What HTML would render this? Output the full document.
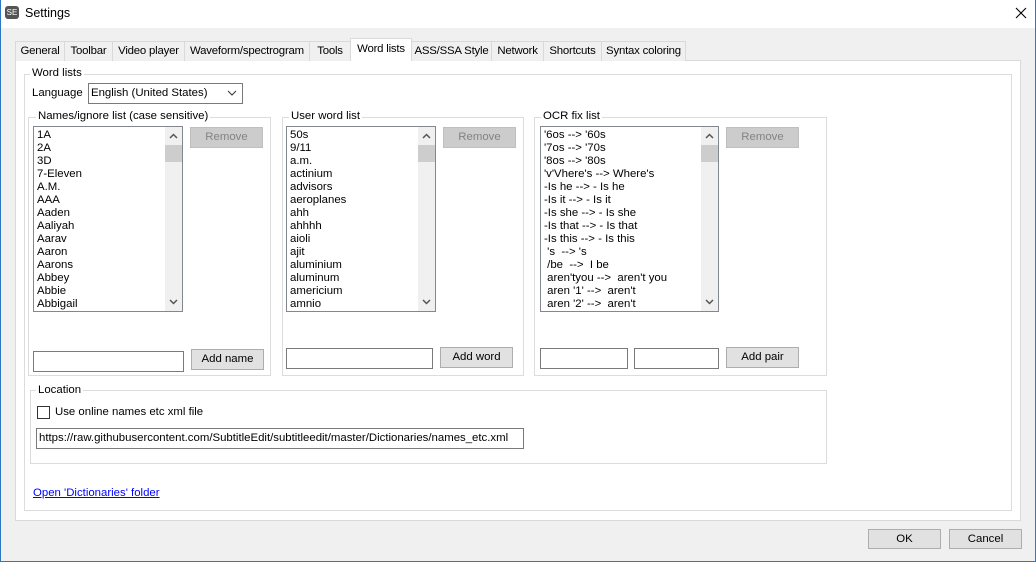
<!DOCTYPE html>
<html><head><meta charset="utf-8"><style>
*{box-sizing:border-box;margin:0;padding:0}
body{width:1036px;height:562px;background:#f0f0f0;font:11.4px "Liberation Sans",sans-serif;color:#000;position:relative;overflow:hidden}
.a{position:absolute}
.win{left:0;top:0;width:1036px;height:562px;border:1px solid #2b79c2;border-top:none}
.title{left:0;top:0;width:1036px;height:28px;background:#fff}
.tab{top:41px;height:20px;background:#f0f0f0;border:1px solid #d9d9d9;border-bottom:none;text-align:center;line-height:18px;white-space:nowrap;letter-spacing:-0.2px}
.tab.sel{top:38px;height:23px;background:#fff;border-color:#d9d9d9;z-index:3;line-height:21px}
.panel{left:15px;top:60px;width:1006px;height:461px;background:#fff;border:1px solid #d9d9d9}
.grp{border:1px solid #dcdcdc}
.lg{background:#fff;padding:0 2px;line-height:13px;white-space:nowrap}
.list{border:1px solid #828790;background:#fff;overflow:hidden;padding-top:2px}
.list div{height:13px;line-height:13px;padding-left:3px;white-space:nowrap}
.list .sb{top:0;right:0;width:17px;height:100%;background:#f0f0f0;padding:0}
.list .th{left:0;top:18px;width:17px;height:17px;background:#cdcdcd;padding:0}
.btn{background:#e1e1e1;border:1px solid #adadad;text-align:center;line-height:19px}
.dis{background:#cccccc;border-color:#bfbfbf;color:#838383}
.tb{border:1px solid #7a7a7a;background:#fff}
</style></head><body>
<div class="a title"></div>
<div class="a" style="left:5px;top:6px;width:14px;height:13px;background:#555;border-radius:3px;color:#fff;font-size:8px;line-height:13px;text-align:center">SE</div>
<div class="a" style="left:25px;top:6px;font-size:12.5px">Settings</div>
<svg class="a" style="left:1015px;top:7px" width="12" height="12"><path d="M1 1L11 11M11 1L1 11" stroke="#000" stroke-width="1.1"/></svg>
<div class="a win"></div>

<div class="a panel"></div>
<div class="a tab" style="left:15px;width:50px">General</div>
<div class="a tab" style="left:64px;width:49px">Toolbar</div>
<div class="a tab" style="left:112px;width:73px">Video player</div>
<div class="a tab" style="left:184px;width:126px">Waveform/spectrogram</div>
<div class="a tab" style="left:309px;width:42px">Tools</div>
<div class="a tab sel" style="left:350px;width:62px">Word lists</div>
<div class="a tab" style="left:411px;width:81px">ASS/SSA Style</div>
<div class="a tab" style="left:491px;width:53px">Network</div>
<div class="a tab" style="left:543px;width:59px">Shortcuts</div>
<div class="a tab" style="left:601px;width:85px">Syntax coloring</div>

<div class="a grp" style="left:24px;top:74px;width:988px;height:437px"></div>
<div class="a lg" style="left:30px;top:67px">Word lists</div>
<div class="a" style="left:32px;top:87px">Language</div>
<div class="a" style="left:88px;top:83px;width:155px;height:21px;border:1px solid #7a7a7a;background:#fff;padding-left:2px;line-height:19px">English (United States)</div>
<svg class="a" style="left:227px;top:90px" width="10" height="6"><path d="M1 1L5 5L9 1" stroke="#333" fill="none"/></svg>

<!-- Names -->
<div class="a grp" style="left:28px;top:117px;width:243px;height:259px"></div>
<div class="a lg" style="left:36px;top:110px">Names/ignore list (case sensitive)</div>
<div class="a list" style="left:33px;top:126px;width:150px;height:186px">
<div>1A</div><div>2A</div><div>3D</div><div>7-Eleven</div><div>A.M.</div><div>AAA</div><div>Aaden</div><div>Aaliyah</div><div>Aarav</div><div>Aaron</div><div>Aarons</div><div>Abbey</div><div>Abbie</div><div>Abbigail</div>
<div class="a sb"><div class="a th"></div><svg class="a" style="left:4px;top:6px" width="9" height="6"><path d="M1 5L4.5 1.5L8 5" stroke="#555" stroke-width="1.5" fill="none"/></svg><svg class="a" style="left:4px;bottom:6px" width="9" height="6"><path d="M1 1L4.5 4.5L8 1" stroke="#555" stroke-width="1.5" fill="none"/></svg></div></div>
<div class="a btn dis" style="left:190px;top:127px;width:73px;height:21px">Remove</div>
<div class="a tb" style="left:33px;top:351px;width:151px;height:21px"></div>
<div class="a btn" style="left:191px;top:349px;width:73px;height:21px">Add name</div>

<!-- User -->
<div class="a grp" style="left:282px;top:117px;width:242px;height:259px"></div>
<div class="a lg" style="left:289px;top:110px">User word list</div>
<div class="a list" style="left:286px;top:126px;width:150px;height:186px">
<div>50s</div><div>9/11</div><div>a.m.</div><div>actinium</div><div>advisors</div><div>aeroplanes</div><div>ahh</div><div>ahhhh</div><div>aioli</div><div>ajit</div><div>aluminium</div><div>aluminum</div><div>americium</div><div>amnio</div>
<div class="a sb"><div class="a th"></div><svg class="a" style="left:4px;top:6px" width="9" height="6"><path d="M1 5L4.5 1.5L8 5" stroke="#555" stroke-width="1.5" fill="none"/></svg><svg class="a" style="left:4px;bottom:6px" width="9" height="6"><path d="M1 1L4.5 4.5L8 1" stroke="#555" stroke-width="1.5" fill="none"/></svg></div></div>
<div class="a btn dis" style="left:443px;top:127px;width:73px;height:21px">Remove</div>
<div class="a tb" style="left:286px;top:348px;width:147px;height:21px"></div>
<div class="a btn" style="left:440px;top:347px;width:73px;height:21px">Add word</div>

<!-- OCR -->
<div class="a grp" style="left:534px;top:117px;width:293px;height:259px"></div>
<div class="a lg" style="left:541px;top:110px">OCR fix list</div>
<div class="a list" style="left:540px;top:126px;width:179px;height:186px">
<div>'6os --&gt; '60s</div><div>'7os --&gt; '70s</div><div>'8os --&gt; '80s</div><div>'v'Vhere's --&gt; Where's</div><div>-Is he --&gt; - Is he</div><div>-Is it --&gt; - Is it</div><div>-Is she --&gt; - Is she</div><div>-Is that --&gt; - Is that</div><div>-Is this --&gt; - Is this</div><div>&nbsp;'s &nbsp;--&gt; 's</div><div>&nbsp;/be &nbsp;--&gt; &nbsp;I be</div><div>&nbsp;aren'tyou --&gt; &nbsp;aren't you</div><div>&nbsp;aren '1' --&gt; &nbsp;aren't</div><div>&nbsp;aren '2' --&gt; &nbsp;aren't</div>
<div class="a sb"><div class="a th"></div><svg class="a" style="left:4px;top:6px" width="9" height="6"><path d="M1 5L4.5 1.5L8 5" stroke="#555" stroke-width="1.5" fill="none"/></svg><svg class="a" style="left:4px;bottom:6px" width="9" height="6"><path d="M1 1L4.5 4.5L8 1" stroke="#555" stroke-width="1.5" fill="none"/></svg></div></div>
<div class="a btn dis" style="left:726px;top:127px;width:73px;height:21px">Remove</div>
<div class="a tb" style="left:540px;top:348px;width:88px;height:21px"></div>
<div class="a tb" style="left:634px;top:348px;width:85px;height:21px"></div>
<div class="a btn" style="left:726px;top:347px;width:73px;height:21px">Add pair</div>

<!-- Location -->
<div class="a grp" style="left:30px;top:390px;width:797px;height:74px"></div>
<div class="a lg" style="left:36px;top:384px">Location</div>
<div class="a" style="left:37px;top:406px;width:13px;height:13px;border:1px solid #333;background:#fff"></div>
<div class="a" style="left:55px;top:406px">Use online names etc xml file</div>
<div class="a tb" style="left:36px;top:428px;width:488px;height:21px;padding-left:2px;line-height:19px;white-space:nowrap;overflow:hidden">https://raw.githubusercontent.com/SubtitleEdit/subtitleedit/master/Dictionaries/names_etc.xml</div>

<div class="a" style="left:33px;top:487px;color:#0000ff;text-decoration:underline">Open 'Dictionaries' folder</div>

<div class="a btn" style="left:868px;top:529px;width:73px;height:20px">OK</div>
<div class="a btn" style="left:949px;top:529px;width:73px;height:20px">Cancel</div>
</body></html>
